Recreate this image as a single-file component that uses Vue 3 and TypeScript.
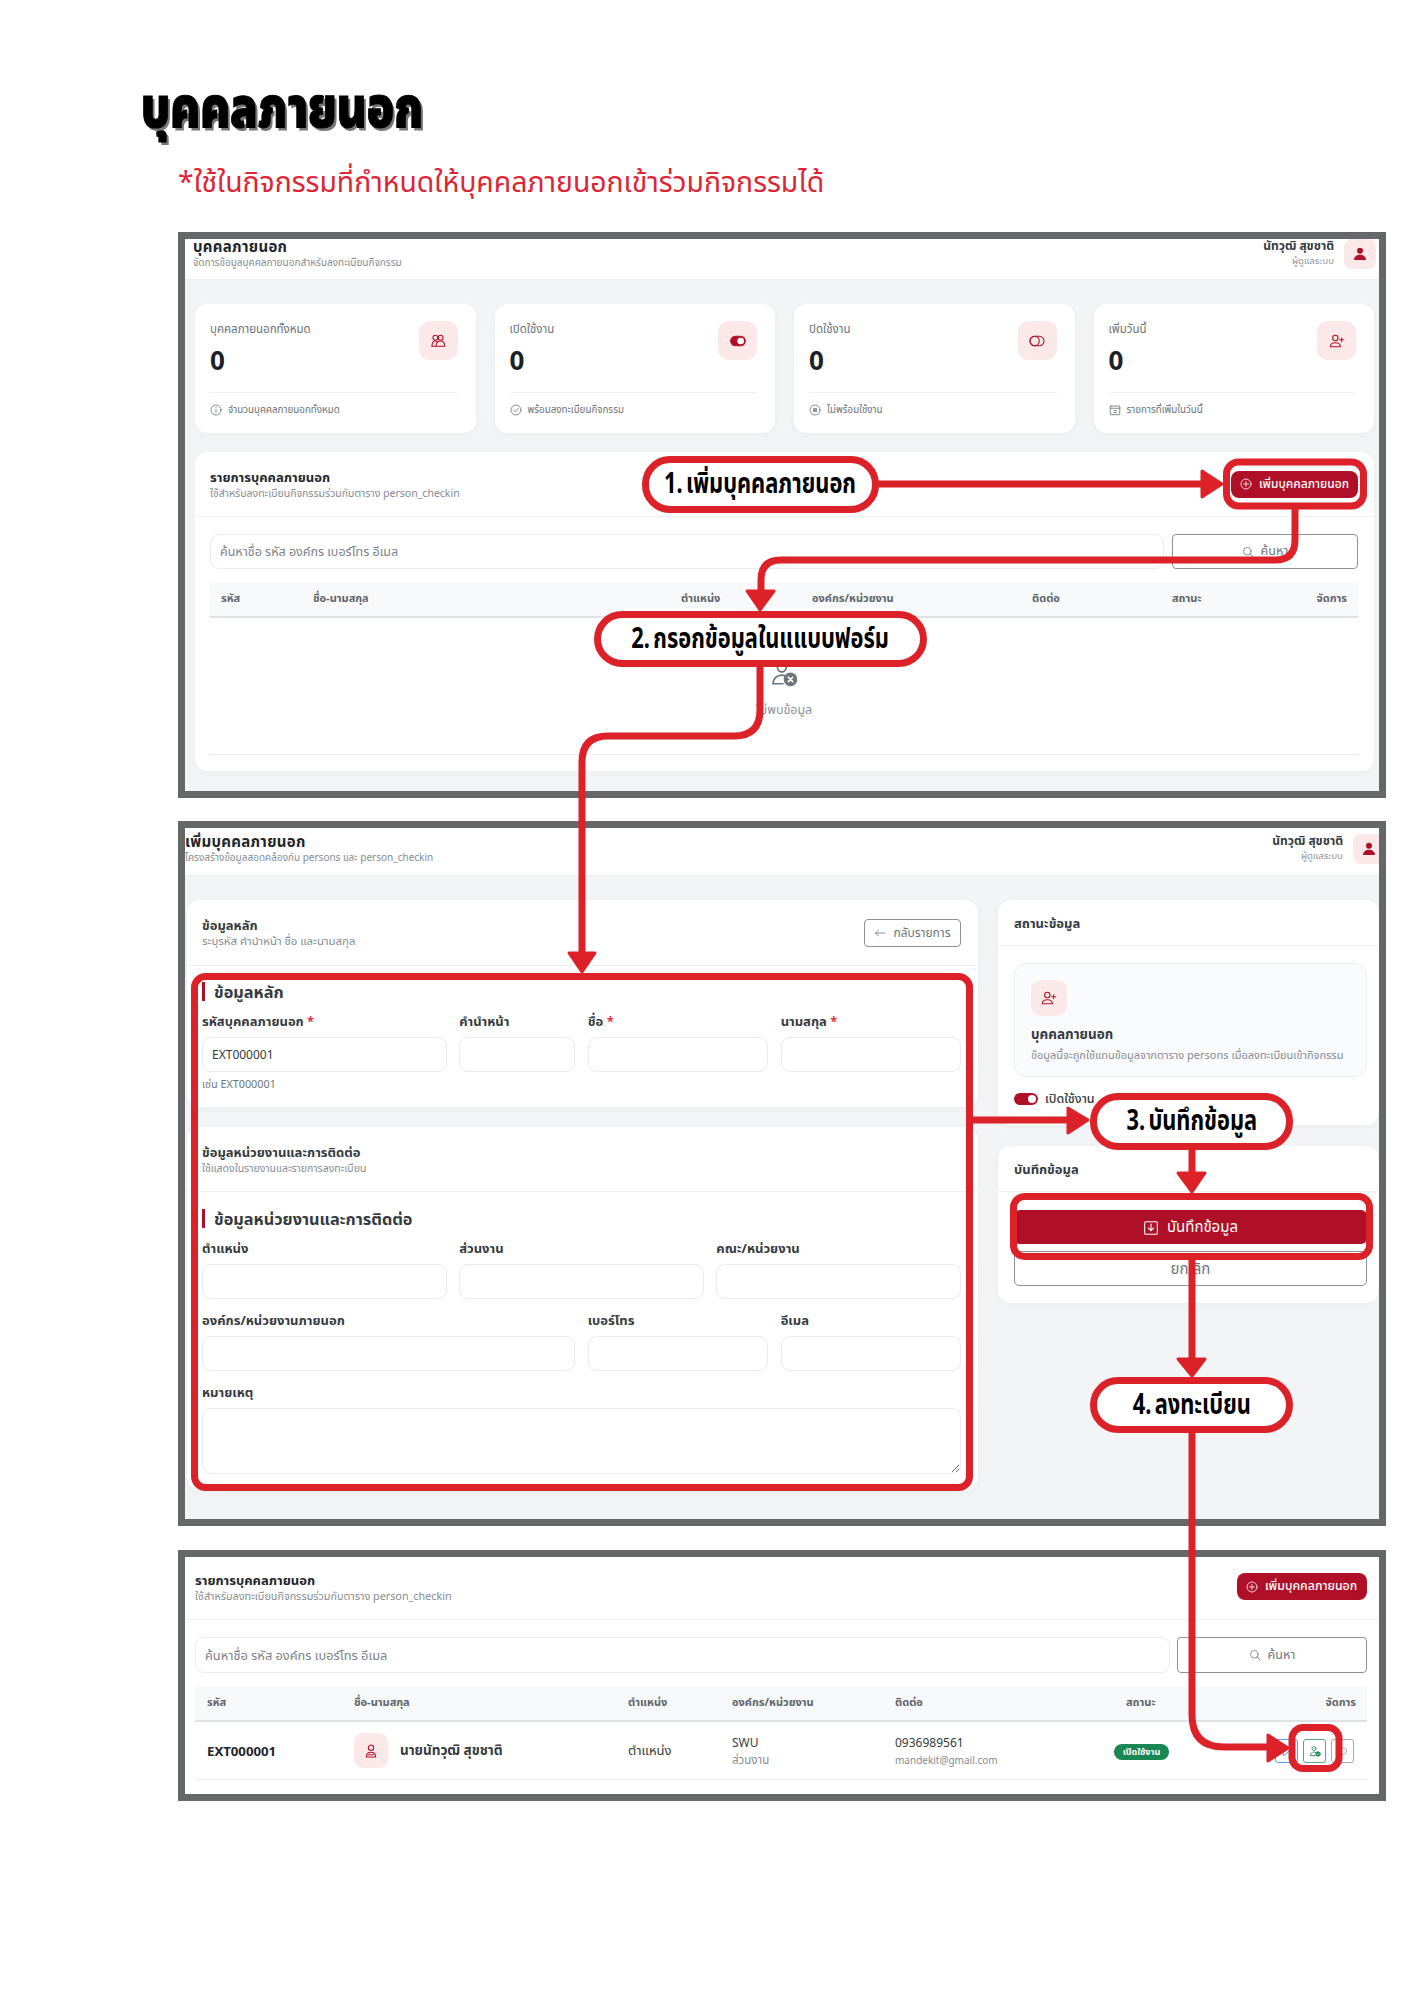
<script setup lang="ts">
// ข้อมูลการ์ดสรุปด้านบน
const stats = [
  { label: "บุคคลภายนอกทั้งหมด", icon: "i-people", foot: "จำนวนบุคคลภายนอกทั้งหมด", footIcon: "i-info" },
  { label: "เปิดใช้งาน", icon: "i-toggle-on", foot: "พร้อมลงทะเบียนกิจกรรม", footIcon: "i-check" },
  { label: "ปิดใช้งาน", icon: "i-toggle-off", foot: "ไม่พร้อมใช้งาน", footIcon: "i-pause" },
  { label: "เพิ่มวันนี้", icon: "i-person-plus", foot: "รายการที่เพิ่มในวันนี้", footIcon: "i-calendar" },
];

const columns = ["รหัส", "ชื่อ-นามสกุล", "ตำแหน่ง", "องค์กร/หน่วยงาน", "ติดต่อ", "สถานะ", "จัดการ"];

// ช่องกรอกของฟอร์ม: span คือจำนวนคอลัมน์จาก 12
const mainFields = [
  { label: "รหัสบุคคลภายนอก", span: 4, required: true, value: "EXT000001", hint: "เช่น EXT000001" },
  { label: "คำนำหน้า", span: 2, required: false, value: "", hint: "" },
  { label: "ชื่อ", span: 3, required: true, value: "", hint: "" },
  { label: "นามสกุล", span: 3, required: true, value: "", hint: "" },
];
const contactFields = [
  { label: "ตำแหน่ง", span: 4 },
  { label: "ส่วนงาน", span: 4 },
  { label: "คณะ/หน่วยงาน", span: 4 },
  { label: "องค์กร/หน่วยงานภายนอก", span: 6 },
  { label: "เบอร์โทร", span: 3 },
  { label: "อีเมล", span: 3 },
];

const callouts = [
  { text: "1. เพิ่มบุคคลภายนอก", cls: "c1" },
  { text: "2. กรอกข้อมูลในแแบบฟอร์ม", cls: "c2" },
  { text: "3. บันทึกข้อมูล", cls: "c3" },
  { text: "4. ลงทะเบียน", cls: "c4" },
];
</script>

<template>
  <div class="page">
    <svg class="defs" width="0" height="0" aria-hidden="true">
      <defs>
        <symbol id="i-people" viewBox="0 0 24 24">
          <circle cx="8" cy="7" r="3.6" /><circle cx="16" cy="7" r="3.6" />
          <path d="M3 20c0-5 2-8 5-8 1 0 2 .4 3 1" /><path d="M9 20c0-5 3-8 7-8s6 3 6 8z" />
          <path d="M3 20h6" />
        </symbol>
        <symbol id="i-toggle-on" viewBox="0 0 24 24">
          <rect x="1" y="5" width="22" height="14" rx="7" fill="currentColor" />
          <circle cx="16" cy="12" r="5" fill="#fff" stroke="none" />
        </symbol>
        <symbol id="i-toggle-off" viewBox="0 0 24 24">
          <rect x="1.5" y="5" width="21" height="14" rx="7" /><circle cx="8.5" cy="12" r="7" />
        </symbol>
        <symbol id="i-person-plus" viewBox="0 0 24 24">
          <circle cx="9.5" cy="7.5" r="4" /><path d="M2 20.5c0-4 3.4-6 7.5-6s7.5 2 7.5 6z" />
          <path d="M19 7v6M16 10h6" />
        </symbol>
        <symbol id="i-person" viewBox="0 0 24 24">
          <circle cx="12" cy="7" r="4" /><path d="M5 21c0-4.500 3-7 7-7s7 2.500 7 7z" /><path d="M8 17.500h8" />
        </symbol>
        <symbol id="i-person-fill" viewBox="0 0 24 24">
          <circle cx="12" cy="7" r="4.500" fill="currentColor" stroke="none" />
          <path d="M3 21c0-5 4-8 9-8s9 3 9 8z" fill="currentColor" stroke="none" />
        </symbol>
        <symbol id="i-person-x" viewBox="0 0 24 24">
          <circle cx="10" cy="6" r="4" /><path d="M2 21c0-5 3.500-8 8-8 1 0 2 .2 3 .5" /><path d="M2 21h9" />
          <circle cx="18" cy="17" r="5.500" fill="currentColor" />
          <path d="M16 15l4 4M20 15l-4 4" stroke="#fff" />
        </symbol>
        <symbol id="i-person-check" viewBox="0 0 24 24">
          <circle cx="10" cy="7" r="4" /><path d="M3 21c0-4.500 3-7 7-7 1.500 0 2.500.3 3.500 1" /><path d="M3 21h9" />
          <circle cx="18" cy="18" r="4.500" fill="currentColor" />
          <path d="M16 18l1.500 1.500L20 17" stroke="#fff" />
        </symbol>
        <symbol id="i-info" viewBox="0 0 24 24">
          <circle cx="12" cy="12" r="10" /><path d="M12 11v6M12 7v1" />
        </symbol>
        <symbol id="i-check" viewBox="0 0 24 24">
          <circle cx="12" cy="12" r="10" /><path d="M7.500 12.500l3 3 6-6.500" />
        </symbol>
        <symbol id="i-pause" viewBox="0 0 24 24">
          <circle cx="12" cy="12" r="10" /><path d="M10 9v6M14 9v6" stroke-width="3" />
        </symbol>
        <symbol id="i-calendar" viewBox="0 0 24 24">
          <rect x="2.500" y="4" width="19" height="17.500" rx="1.500" /><path d="M2.500 8.500h19M10 13h5M10 17h5" />
        </symbol>
        <symbol id="i-plus-circle" viewBox="0 0 24 24">
          <circle cx="12" cy="12" r="10" /><path d="M12 7v10M7 12h10" />
        </symbol>
        <symbol id="i-search" viewBox="0 0 24 24">
          <circle cx="10.500" cy="10.500" r="7.500" /><path d="M16 16l6 6" />
        </symbol>
        <symbol id="i-arrow-left" viewBox="0 0 24 24">
          <path d="M22 12H3M9 6l-6 6 6 6" />
        </symbol>
        <symbol id="i-save" viewBox="0 0 24 24">
          <rect x="2.500" y="2.500" width="19" height="19" rx="2" /><path d="M12 6v10M8 12l4 4 4-4" />
        </symbol>
        <symbol id="i-pencil" viewBox="0 0 24 24">
          <path d="M4 20l1-5L16 4l4 4L9 19z" />
        </symbol>
        <symbol id="i-eye" viewBox="0 0 24 24">
          <circle cx="12" cy="12" r="7" />
        </symbol>
      </defs>
    </svg>

    <header class="heading">
      <h1>บุคคลภายนอก</h1>
      <p>*ใช้ในกิจกรรมที่กำหนดให้บุคคลภายนอกเข้าร่วมกิจกรรมได้</p>
    </header>

    <!-- ภาพที่ 1: หน้ารายการ -->
    <section class="frame frame-list">
      <div class="topbar topbar-list">
        <div class="topbar-title">
          <strong>บุคคลภายนอก</strong>
          <small>จัดการข้อมูลบุคคลภายนอกสำหรับลงทะเบียนกิจกรรม</small>
        </div>
        <div class="user">
          <div><strong>นัทวุฒิ สุขชาติ</strong><small>ผู้ดูแลระบบ</small></div>
          <span class="avatar"><svg class="ico"><use href="#i-person-fill" /></svg></span>
        </div>
      </div>
      <div class="content content-list">
        <div class="stats">
          <article v-for="s in stats" :key="s.label" class="stat">
            <div class="stat-top">
              <div>
                <p class="stat-label">{{ s.label }}</p>
                <p class="stat-num">0</p>
              </div>
              <span class="stat-icon"><svg class="ico"><use :href="'#' + s.icon" /></svg></span>
            </div>
            <p class="stat-foot"><svg class="ico-sm"><use :href="'#' + s.footIcon" /></svg>{{ s.foot }}</p>
          </article>
        </div>

        <div class="card list-card">
          <div class="panel-head">
            <div>
              <h3>รายการบุคคลภายนอก</h3>
              <small>ใช้สำหรับลงทะเบียนกิจกรรมร่วมกับตาราง person_checkin</small>
            </div>
            <button class="btn-add"><svg class="ico-sm"><use href="#i-plus-circle" /></svg>เพิ่มบุคคลภายนอก</button>
          </div>
          <div class="panel-body">
            <div class="search-row">
              <input class="search" placeholder="ค้นหาชื่อ รหัส องค์กร เบอร์โทร อีเมล" />
              <button class="btn-search"><svg class="ico-sm"><use href="#i-search" /></svg>ค้นหา</button>
            </div>
            <div class="thead cols-a">
              <span v-for="c in columns" :key="c">{{ c }}</span>
            </div>
            <div class="empty">
              <svg class="empty-ico"><use href="#i-person-x" /></svg>
              <span>ไม่พบข้อมูล</span>
            </div>
          </div>
        </div>
      </div>
    </section>

    <!-- ภาพที่ 2: ฟอร์มเพิ่มข้อมูล -->
    <section class="frame frame-form">
      <div class="topbar topbar-form">
        <div class="topbar-title">
          <strong>เพิ่มบุคคลภายนอก</strong>
          <small>โครงสร้างข้อมูลสอดคล้องกับ persons และ person_checkin</small>
        </div>
        <div class="user">
          <div><strong>นัทวุฒิ สุขชาติ</strong><small>ผู้ดูแลระบบ</small></div>
          <span class="avatar"><svg class="ico"><use href="#i-person-fill" /></svg></span>
        </div>
      </div>
      <div class="content content-form">
        <div class="form-col">
          <div class="card">
            <div class="form-head head-a">
              <div>
                <h3>ข้อมูลหลัก</h3>
                <small>ระบุรหัส คำนำหน้า ชื่อ และนามสกุล</small>
              </div>
              <button class="btn-back"><svg class="ico-sm"><use href="#i-arrow-left" /></svg>กลับรายการ</button>
            </div>
            <div class="form-body">
              <h4 class="section-title">ข้อมูลหลัก</h4>
              <div class="fields">
                <label v-for="f in mainFields" :key="f.label" :class="'span-' + f.span">
                  <span class="field-label">{{ f.label }}<em v-if="f.required"> *</em></span>
                  <input :value="f.value" />
                  <small v-if="f.hint" class="hint">{{ f.hint }}</small>
                </label>
              </div>
            </div>
          </div>
          <div class="card">
            <div class="form-head head-b">
              <div>
                <h3>ข้อมูลหน่วยงานและการติดต่อ</h3>
                <small>ใช้แสดงในรายงานและรายการลงทะเบียน</small>
              </div>
            </div>
            <div class="form-body body-b">
              <h4 class="section-title">ข้อมูลหน่วยงานและการติดต่อ</h4>
              <div class="fields">
                <label v-for="f in contactFields" :key="f.label" :class="'span-' + f.span">
                  <span class="field-label">{{ f.label }}</span>
                  <input />
                </label>
                <label class="span-12">
                  <span class="field-label">หมายเหตุ</span>
                  <textarea></textarea>
                </label>
              </div>
            </div>
          </div>
        </div>

        <div class="side-col">
          <div class="card">
            <h3 class="side-head">สถานะข้อมูล</h3>
            <div class="side-body">
              <div class="info-box">
                <span class="info-icon"><svg class="ico"><use href="#i-person-plus" /></svg></span>
                <h5>บุคคลภายนอก</h5>
                <small>ข้อมูลนี้จะถูกใช้แทนข้อมูลจากตาราง persons เมื่อลงทะเบียนเข้ากิจกรรม</small>
              </div>
              <div class="switch"><span class="switch-track"></span>เปิดใช้งาน</div>
            </div>
          </div>
          <div class="card">
            <h3 class="side-head">บันทึกข้อมูล</h3>
            <div class="side-body actions">
              <button class="btn-save"><svg class="ico"><use href="#i-save" /></svg>บันทึกข้อมูล</button>
              <button class="btn-cancel">ยกเลิก</button>
            </div>
          </div>
        </div>
      </div>
    </section>

    <!-- ภาพที่ 3: รายการหลังบันทึก -->
    <section class="frame frame-result">
      <div class="panel-head">
        <div>
          <h3>รายการบุคคลภายนอก</h3>
          <small>ใช้สำหรับลงทะเบียนกิจกรรมร่วมกับตาราง person_checkin</small>
        </div>
        <button class="btn-add"><svg class="ico-sm"><use href="#i-plus-circle" /></svg>เพิ่มบุคคลภายนอก</button>
      </div>
      <div class="panel-body">
        <div class="search-row">
          <input class="search" placeholder="ค้นหาชื่อ รหัส องค์กร เบอร์โทร อีเมล" />
          <button class="btn-search"><svg class="ico-sm"><use href="#i-search" /></svg>ค้นหา</button>
        </div>
        <div class="thead cols-b">
          <span v-for="c in columns" :key="c">{{ c }}</span>
        </div>
        <div class="trow cols-b">
          <strong class="code">EXT000001</strong>
          <div class="who">
            <span class="who-icon"><svg class="ico"><use href="#i-person" /></svg></span>
            <strong>นายนัทวุฒิ สุขชาติ</strong>
          </div>
          <span class="pos">ตำแหน่ง</span>
          <div class="two"><span>SWU</span><small>ส่วนงาน</small></div>
          <div class="two"><span>0936989561</span><small class="mail">mandekit@gmail.com</small></div>
          <div><span class="badge">เปิดใช้งาน</span></div>
          <div class="row-actions">
            <button class="act blue"><svg class="ico-xs"><use href="#i-pencil" /></svg></button>
            <button class="act green"><svg class="ico-xs"><use href="#i-person-check" /></svg></button>
            <button class="act gray"><svg class="ico-xs"><use href="#i-eye" /></svg></button>
          </div>
        </div>
      </div>
    </section>

    <!-- เส้นลูกศรและกรอบแดงที่วางทับบนภาพ -->
    <svg class="overlay" viewBox="0 0 1414 2000">
      <g class="boxes">
        <rect x="1226.500" y="462" width="137" height="44" rx="12" />
        <rect x="194.500" y="976.500" width="775" height="511" rx="11" />
        <rect x="1013.500" y="1196.500" width="356" height="60" rx="11" />
        <rect x="1292" y="1727.500" width="47" height="41" rx="11" />
      </g>
      <g class="lines">
        <path d="M879 484H1203" />
        <path d="M1295 509V540Q1295 560 1275 560H781Q761 560 761 580V592" />
        <path d="M760 667V710Q760 736 734 736H608Q582 736 582 762V954" />
        <path d="M973 1120H1069" />
        <path d="M1192 1149V1174" />
        <path d="M1192 1260V1360" />
        <path d="M1192 1433V1715Q1192 1747 1224 1747H1269" />
      </g>
      <g class="heads">
        <path d="M1202 471L1222 484L1202 497Z" />
        <path d="M747 591L760 610L774 591Z" />
        <path d="M569 953L582 972L595 953Z" />
        <path d="M1068 1108L1088 1120L1068 1133Z" />
        <path d="M1178 1173L1192 1192L1205 1173Z" />
        <path d="M1178 1359L1192 1376L1205 1359Z" />
        <path d="M1268 1735L1288 1748L1268 1761Z" />
      </g>
    </svg>
    <div v-for="c in callouts" :key="c.cls" class="callout" :class="c.cls"><span>{{ c.text }}</span></div>
  </div>
</template>

<style>
html,
body {
  background: #fff;
}
</style>

<style scoped>
.page {
  position: relative;
  width: 1414px;
  height: 2000px;
  padding: 80px 28px 0 178px;
  box-sizing: border-box;
  overflow: hidden;
  background: #fff;
  font-family: "Noto Sans", "Noto Sans Thai", "Liberation Sans", sans-serif;
  color: #212529;
}
.defs {
  position: absolute;
}
svg symbol,
svg {
  fill: none;
  stroke: currentColor;
  stroke-width: 1.6;
  stroke-linecap: round;
  stroke-linejoin: round;
}
h1,
h3,
h4,
h5,
p {
  margin: 0;
}
small {
  display: block;
}
button {
  font-family: inherit;
  cursor: pointer;
}

/* หัวเรื่องของหน้า */
.heading {
  height: 152px;
}
.heading h1 {
  margin-left: -37px;
  font-size: 57px;
  line-height: 50px;
  font-weight: 900;
  color: #000;
  -webkit-text-stroke: 1px #000;
  text-shadow: 3px 3px 0 #777;
  transform: scaleX(0.79);
  transform-origin: left center;
  white-space: nowrap;
}
.heading p {
  margin-top: 31px;
  font-size: 28.400px;
  line-height: 40px;
  color: #dc2535;
}

/* กรอบภาพหน้าจอ */
.frame {
  box-sizing: border-box;
  width: 1208px;
  border: 7px solid #666769;
  background: #fff;
  overflow: hidden;
}
.frame-list {
  height: 566px;
}
.frame-form {
  height: 705px;
  margin-top: 23px;
}
.frame-result {
  height: 251px;
  margin-top: 24px;
}

.topbar {
  display: flex;
  justify-content: space-between;
  background: #fff;
  border-bottom: 1px solid #eceef1;
  box-sizing: border-box;
}
.topbar-list {
  height: 41px;
  padding: 0 3px 0 8px;
}
.topbar-form {
  height: 48px;
  padding: 6px 0 0 0;
}
.topbar-title strong {
  display: block;
  font-size: 15px;
  line-height: 14px;
  font-weight: 700;
  letter-spacing: 0.3px;
}
.topbar-title small {
  margin-top: 3px;
  font-size: 10px;
  line-height: 13px;
  color: #858b92;
}
.user {
  display: flex;
  gap: 10px;
  text-align: right;
}
.user strong {
  display: block;
  font-size: 12px;
  line-height: 14px;
  color: #343a40;
}
.user small {
  margin-top: 1px;
  font-size: 9.500px;
  line-height: 13px;
  color: #8e949b;
}
.avatar {
  display: flex;
  align-items: center;
  justify-content: center;
  width: 32px;
  height: 30px;
  border-radius: 8px;
  background: #fbe9ea;
  color: #b01027;
}
.topbar-form .avatar {
  margin-right: -6px;
}
.ico {
  width: 16px;
  height: 16px;
}
.ico-sm {
  width: 12px;
  height: 12px;
  flex: none;
}
.ico-xs {
  width: 12px;
  height: 12px;
}

.content {
  background: #f3f4f6;
}
.content-list {
  height: 511px;
  padding: 24px 5px 0 10px;
}
.stats {
  display: grid;
  grid-template-columns: repeat(4, 1fr);
  gap: 19px;
}
.stat {
  display: flex;
  flex-direction: column;
  height: 129px;
  padding: 16px 18px 0 15px;
  box-sizing: border-box;
  border-radius: 13px;
  background: #fff;
  box-shadow: 0 2px 8px rgba(30, 40, 60, 0.04);
}
.stat-top {
  display: flex;
  justify-content: space-between;
  height: 72px;
  border-bottom: 1px solid #eef0f2;
}
.stat-label {
  margin-top: 1px;
  font-size: 11.500px;
  line-height: 16px;
  color: #6b7178;
}
.stat-num {
  margin-top: 7px;
  font-size: 26px;
  line-height: 32px;
  font-weight: 700;
  color: #1c2128;
}
.stat-icon {
  display: flex;
  align-items: center;
  justify-content: center;
  width: 39px;
  height: 39px;
  margin-top: 1px;
  border-radius: 11px;
  background: #fbe9ea;
  color: #b01027;
}
.stat-foot {
  display: flex;
  align-items: center;
  gap: 6px;
  margin-top: 9px;
  font-size: 9.800px;
  line-height: 16px;
  color: #6b7178;
}

.card {
  background: #fff;
  border-radius: 13px;
  box-shadow: 0 2px 8px rgba(30, 40, 60, 0.04);
}
.list-card {
  height: 319px;
  margin-top: 19px;
  padding: 0 16px 0 15px;
}

/* ส่วนหัวและตารางรายการ */
.panel-head {
  display: flex;
  align-items: center;
  justify-content: space-between;
  height: 64px;
  margin: 0 -16px 0 -15px;
  padding: 0 16px 0 15px;
  border-bottom: 1px solid #eef0f2;
}
.frame-result .panel-head {
  margin: 0;
  padding: 0 12px 3px 10px;
  height: 63px;
  box-sizing: border-box;
}
.panel-head h3 {
  font-size: 13px;
  line-height: 18px;
  font-weight: 700;
}
.panel-head small {
  font-size: 10.500px;
  line-height: 14px;
  color: #858b92;
}
.frame-result .panel-head small {
  font-size: 10.800px;
}
.btn-add {
  display: flex;
  align-items: center;
  gap: 7px;
  width: 127px;
  height: 27px;
  padding: 0 0 0 9px;
  border: none;
  border-radius: 8px;
  background: #b01027;
  color: #fff;
  font-size: 12px;
  font-weight: 500;
  white-space: nowrap;
}
.frame-result .btn-add {
  width: 130px;
  font-size: 12.300px;
}
.panel-body {
  padding-top: 17px;
}
.frame-result .panel-body {
  padding: 17px 12px 0 10px;
}
.search-row {
  display: grid;
  grid-template-columns: 1fr 186px;
  gap: 8px;
}
input,
textarea {
  box-sizing: border-box;
  width: 100%;
  border: 1px solid #e9ebee;
  border-radius: 9px;
  outline: none;
  background: #fff;
  font-family: inherit;
  font-size: 12px;
  color: #343a40;
}
input {
  display: block;
  height: 35px;
  padding: 0 9px;
}
.search {
  font-size: 12.500px;
}
.frame-result .search {
  font-size: 12.800px;
}
.search::placeholder {
  color: #7b8188;
}
.btn-search {
  display: flex;
  align-items: center;
  justify-content: center;
  gap: 7px;
  height: 35px;
  border: 1px solid #8c9197;
  border-radius: 4px;
  background: #fff;
  color: #6c757d;
  font-size: 12.500px;
}
.thead {
  display: grid;
  align-items: center;
  height: 36px;
  margin-top: 13px;
  padding: 0 0 1px 11px;
  box-sizing: border-box;
  border-bottom: 2px solid #dee2e6;
  background: #f8f9fa;
  font-size: 11px;
  font-weight: 700;
  color: #5e646b;
}
.thead span:last-child {
  text-align: right;
  padding-right: 11px;
}
.cols-a {
  grid-template-columns: 92px 368px 131px 220px 140px 100px 1fr;
}
.cols-b {
  grid-template-columns: 147px 274px 104px 163px 231px 140px 1fr;
  padding-left: 12px;
}
.empty {
  display: flex;
  flex-direction: column;
  align-items: center;
  gap: 14px;
  height: 137px;
  box-sizing: border-box;
  padding-top: 43px;
  border-bottom: 1px solid #e9ebee;
  font-size: 12.500px;
  color: #8b9198;
}
.empty-ico {
  width: 26px;
  height: 26px;
  color: #6c757d;
}

/* ฟอร์ม */
.content-form {
  display: grid;
  grid-template-columns: 791px 1fr;
  gap: 20px;
  height: 643px;
  padding: 24px 0 0 2px;
}
.form-col,
.side-col {
  display: flex;
  flex-direction: column;
  gap: 20px;
}
.side-col {
  gap: 21px;
}
.form-head {
  display: flex;
  align-items: center;
  justify-content: space-between;
  padding: 0 17px 0 15px;
  border-bottom: 1px solid #eef0f2;
}
.head-a {
  height: 65px;
}
.head-a > div {
  margin-top: -2px;
}
.head-b {
  height: 64px;
}
.form-head h3,
.side-head {
  font-size: 13px;
  line-height: 18px;
  font-weight: 700;
  color: #343a40;
}
.form-head small {
  font-size: 11.400px;
  line-height: 14px;
  color: #858b92;
}
.head-b small {
  font-size: 10.500px;
}
.btn-back {
  display: flex;
  align-items: center;
  justify-content: center;
  gap: 7px;
  width: 97px;
  height: 28px;
  border: 1px solid #8c9197;
  border-radius: 4px;
  background: #fff;
  color: #6c757d;
  font-size: 12px;
}
.form-body {
  padding: 16px 17px 16px 15px;
}
.body-b {
  padding-top: 17px;
}
.section-title {
  height: 19px;
  margin-bottom: 13px;
  padding-left: 9px;
  border-left: 3px solid #b01027;
  font-size: 16.300px;
  line-height: 20px;
  font-weight: 700;
  color: #343a40;
}
.fields {
  display: grid;
  grid-template-columns: repeat(12, 1fr);
  gap: 14px 12.500px;
}
.span-2 {
  grid-column: span 2;
}
.span-3 {
  grid-column: span 3;
}
.span-4 {
  grid-column: span 4;
}
.span-6 {
  grid-column: span 6;
}
.span-12 {
  grid-column: span 12;
}
.field-label {
  display: block;
  margin-bottom: 8px;
  font-size: 13px;
  line-height: 15px;
  font-weight: 700;
  color: #343a40;
}
.field-label em {
  font-style: normal;
  color: #dc3545;
}
.hint {
  margin-top: 5px;
  font-size: 10.800px;
  line-height: 14px;
  color: #6c757d;
}
textarea {
  display: block;
  height: 66px;
}

/* คอลัมน์ขวา */
.side-head {
  height: 46px;
  padding: 0 16px;
  box-sizing: border-box;
  line-height: 46px;
  border-bottom: 1px solid #eef0f2;
}
.side-body {
  padding: 17px 12px 20px 16px;
}
.info-box {
  height: 114px;
  box-sizing: border-box;
  padding: 16px 16px 0;
  border: 1px solid #eceef1;
  border-radius: 12px;
  background: #fafbfc;
}
.info-icon {
  display: flex;
  align-items: center;
  justify-content: center;
  width: 36px;
  height: 36px;
  border-radius: 10px;
  background: #fbe9ea;
  color: #b01027;
}
.info-box h5 {
  margin-top: 10px;
  font-size: 13.500px;
  line-height: 16px;
  color: #343a40;
}
.info-box small {
  margin-top: 5px;
  font-size: 11px;
  line-height: 16px;
  white-space: nowrap;
  color: #858b92;
}
.switch {
  display: flex;
  align-items: center;
  gap: 7px;
  height: 12px;
  margin-top: 16px;
  font-size: 12.500px;
  font-weight: 500;
  color: #343a40;
}
.switch-track {
  position: relative;
  width: 24px;
  height: 12px;
  border-radius: 6px;
  background: #b01027;
}
.switch-track::after {
  content: "";
  position: absolute;
  right: 2px;
  top: 2px;
  width: 8px;
  height: 8px;
  border-radius: 50%;
  background: #fff;
}
.actions {
  display: flex;
  flex-direction: column;
  gap: 7px;
  padding: 18px 12px 17px 16px;
}
.btn-save,
.btn-cancel {
  display: flex;
  align-items: center;
  justify-content: center;
  gap: 8px;
  padding-top: 2px;
  font-size: 15px;
}
.btn-save {
  height: 34px;
  border: none;
  border-radius: 6px;
  background: #b01027;
  color: #fff;
}
.btn-cancel {
  height: 35px;
  border: 1px solid #8c9197;
  border-radius: 5px;
  background: #fff;
  color: #6c757d;
}

/* แถวข้อมูลในภาพที่ 3 */
.frame-result .search-row {
  grid-template-columns: 1fr 190px;
  gap: 7px;
}
.frame-result .search,
.frame-result .btn-search {
  height: 36px;
}
.trow {
  display: grid;
  align-items: center;
  height: 57px;
  border-bottom: 1px solid #e9ebee;
  font-size: 12px;
  color: #343a40;
}
.code {
  font-size: 13.200px;
  color: #212529;
}
.who {
  display: flex;
  align-items: center;
  gap: 12px;
}
.who strong {
  font-size: 13.500px;
  font-weight: 700;
}
.who-icon {
  display: flex;
  align-items: center;
  justify-content: center;
  width: 34px;
  height: 35px;
  border-radius: 9px;
  background: #fbe9ea;
  color: #b01027;
}
.pos {
  font-size: 13px;
}
.two span {
  display: block;
  line-height: 15px;
}
.two small {
  margin-top: 3px;
  font-size: 11.500px;
  line-height: 14px;
  color: #858b92;
}
.two .mail {
  font-size: 10px;
}
.badge {
  display: inline-block;
  width: 55px;
  height: 16px;
  margin-left: -12px;
  border-radius: 8px;
  background: #198754;
  color: #fff;
  text-align: center;
  font-size: 9px;
  font-weight: 700;
  line-height: 16px;
}
.row-actions {
  display: flex;
  justify-content: flex-end;
  gap: 5px;
  padding-right: 13px;
}
.act {
  display: flex;
  align-items: center;
  justify-content: center;
  width: 23px;
  height: 24px;
  padding: 0;
  border-radius: 3px;
  background: #fff;
}
.blue {
  border: 1px solid #5a9bf0;
  color: #2f7de1;
}
.green {
  border: 1px solid #5aa880;
  color: #198754;
}
.gray {
  border: 1px solid #a3a8ad;
  color: #9aa0a6;
}

/* ลูกศรและกล่องข้อความคำอธิบาย */
.overlay {
  position: absolute;
  left: 0;
  top: 0;
  width: 1414px;
  height: 2000px;
  pointer-events: none;
}
.overlay .boxes rect,
.overlay .lines path {
  fill: none;
  stroke: #dc2228;
  stroke-width: 7;
}
.overlay .heads path {
  fill: #dc2228;
  stroke: #dc2228;
  stroke-width: 3;
}
.callout {
  position: absolute;
  display: flex;
  align-items: center;
  justify-content: center;
  box-sizing: border-box;
  height: 57px;
  border: 7px solid #dc2228;
  border-radius: 28px;
  background: #fff;
  color: #000;
  font-size: 28px;
  font-weight: 700;
  white-space: nowrap;
}
.callout span {
  display: block;
  word-spacing: -3px;
  transform: scaleX(0.78);
}
.c1 {
  left: 642px;
  top: 456px;
  width: 237px;
}
.c2 {
  left: 594px;
  top: 611px;
  width: 333px;
  height: 56px;
}
.c3 {
  left: 1090px;
  top: 1093px;
  width: 203px;
}
.c4 {
  left: 1090px;
  top: 1377px;
  width: 203px;
  height: 56px;
}
</style>
